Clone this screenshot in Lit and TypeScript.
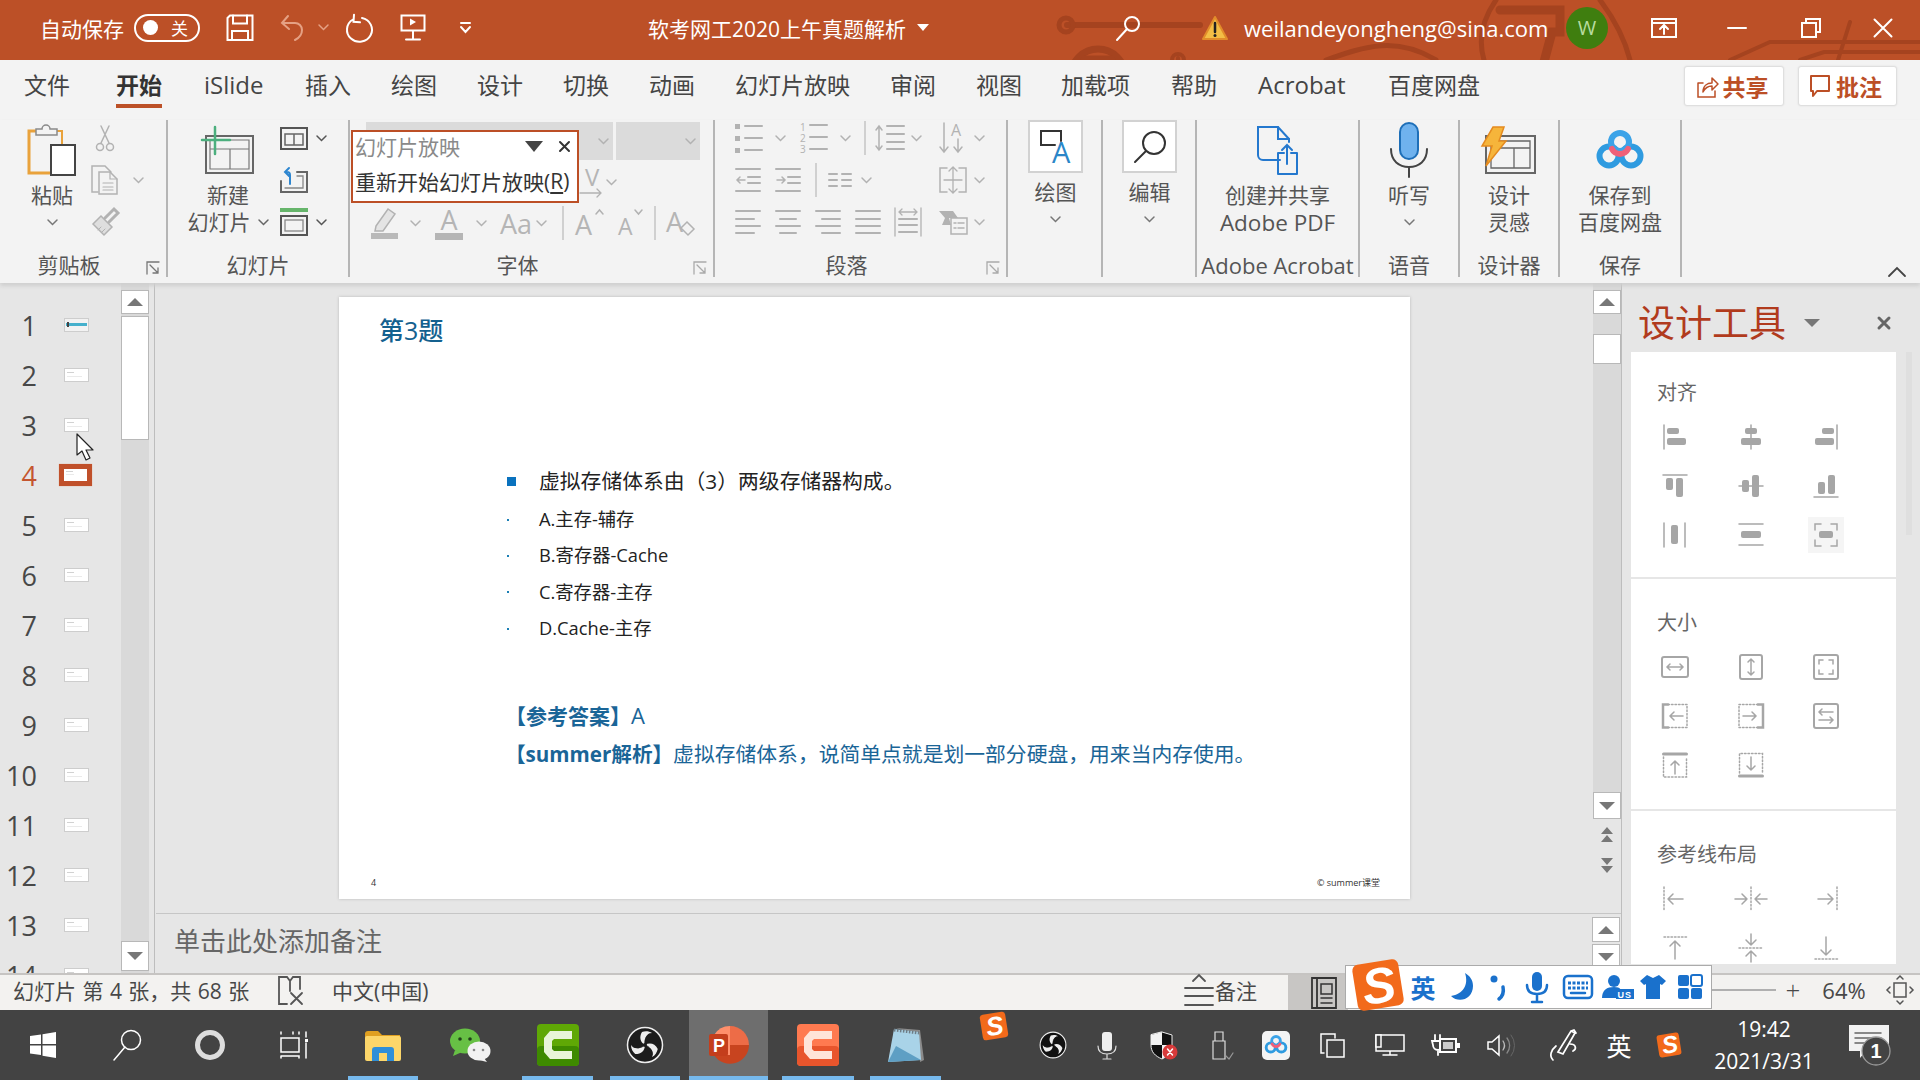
import { LitElement, html, css } from "lit";
import { customElement } from "lit/decorators.js";
import { unsafeHTML } from "lit/directives/unsafe-html.js";

const S = (w: number, h: number, b: string) =>
  `<svg width="${w}" height="${h}" viewBox="0 0 ${w} ${h}" fill="none" stroke-linecap="round">${b}</svg>`;
type It = [number, number, string, string?];
const lay = (o: number, items: It[], cls = "") => {
  let p = o;
  return `<div class="lay ${cls}">` + items.map(([x, w, c, k]) => {
    const m = x - p; p = x + w;
    return `<span class="slot ${k || ""}" style="margin-left:${m}px;width:${w}px">${c}</span>`;
  }).join("") + "</div>";
};
const G = "#B2B2B2";
const chev = (c = "#777") => S(11, 7, `<path d="M1 1l4.500 4.500L10 1" stroke="${c}" stroke-width="1.500"/>`);
const big = (icon: string, lines: string[], cls = "") =>
  `<span class="big ${cls}"><span class="bi">${icon}</span>${lines.map(l => `<span class="bl">${l}</span>`).join("")}</span>`;
const rows = (r: string[], cls = "") => `<div class="rows ${cls}">${r.join("")}</div>`;

/* ---- title bar icons ---- */
const W = `stroke="#fff" stroke-width="2"`;
const tSave = S(28, 27, `<path d="M1.500 4v22h25V1.500H4z" ${W}/><path d="M7 1.500v8h14v-8M6 26v-9h16v9" ${W}/>`);
const tUndo = S(26, 27, `<path d="M9 2L3 9l7 6M3 9h13a7 7 0 0 1 7 7c0 4-3 8-7 10" stroke="#E5A184" stroke-width="2"/>`);
const tRedo = S(30, 28, `<path d="M16 4a12.500 12 0 1 1-9 1.500M8 .8l-.5 7 6.500 .5" ${W}/>`);
const tPres = S(26, 27, `<path d="M1.500 1.500h23v15h-23zM13 17v8M6 25.500h14" ${W}/><path d="M10 4.500l6 3.500-6 3.500z" fill="#fff"/>`);
const tCust = S(11, 12, `<path d="M1 1h9M1 5l4.500 5L10 5" ${W}/>`);
const tSearch = S(26, 26, `<circle cx="17" cy="9" r="7" ${W}/><path d="M12 14L2 25" ${W}/>`);
const tWarn = S(26, 26, `<path d="M13 2L25 24H1z" fill="#F3BE45" stroke="#E28C2A" stroke-width="2" stroke-linejoin="round"/><path d="M13 8v9" stroke="#222" stroke-width="2.500"/><circle cx="13" cy="20.500" r="1.500" fill="#222"/>`);
const tDisp = S(26, 20, `<rect x="1" y="1" width="24" height="18" ${W}/><path d="M1 5h24M13 16V8M9 11l4-4 4 4" ${W}/>`);
const tMin = S(20, 4, `<path d="M1 2h18" ${W}/>`);
const tRest = S(20, 20, `<path d="M5 5V1h14v13h-4" ${W}/><rect x="1" y="5" width="14" height="14" ${W}/>`);
const tClose = S(20, 20, `<path d="M1.500 1.500l17 17M18.500 1.500l-17 17" ${W}/>`);

/* ---- ribbon icons ---- */
const paste = S(50, 52, `<path d="M9 7H2v42h21" stroke="#E9A23B" stroke-width="3"/><path d="M30 7h5v13" stroke="#E9A23B" stroke-width="2"/><path d="M9 11V5h6a4 4 0 0 1 8 0h7v6z" fill="#F3F3F3" stroke="#8A8A8A" stroke-width="1.500"/><rect x="24" y="21" width="24" height="30" fill="#fff" stroke="#444" stroke-width="2"/>`);
const sciss = S(18, 27, `<path d="M5 1l8 17M13 1L5 18" stroke="${G}" stroke-width="1.500"/><circle cx="4" cy="22" r="3.500" stroke="${G}" stroke-width="1.500"/><circle cx="14" cy="22" r="3.500" stroke="${G}" stroke-width="1.500"/>`);
const copy = S(30, 30, `<path d="M7 27H1V1h13l6 6" stroke="${G}" stroke-width="1.500"/><path d="M8 7h11l7 7v15H8z" stroke="${G}" stroke-width="1.500"/><path d="M12 18h10M12 22h10M12 25h10M19 7v7h7" stroke="${G}" stroke-width="1.200"/>`);
const brush = S(28, 30, `<path d="M2 17l11 11 8-8L10 9z" fill="#DEDEDE" stroke="${G}" stroke-width="1.500"/><path d="M14 11l9-9 4 4-9 9" stroke="${G}" stroke-width="3"/><path d="M7 23l3-3M11 25l3-3" stroke="${G}"/>`);
const newSlide = S(54, 48, `<rect x="5" y="10" width="47" height="37" stroke="#666" stroke-width="2"/><path d="M9 14h39v29H9zM9 23h39M29 23v20" stroke="#777" stroke-width="1.200"/><path d="M14 1v27M1 14h28" stroke="#4CAF7E" stroke-width="2.500"/>`);
const sLayout = S(28, 23, `<rect x="1" y="1" width="26" height="21" stroke="#555" stroke-width="2"/><path d="M5 7h18v11H5zM14 7v11" stroke="#666" stroke-width="1.500"/>`);
const sReset = S(28, 26, `<path d="M1 14v11h26V5H17" stroke="#666" stroke-width="2"/><path d="M5 21h18V9h-6" stroke="#888" stroke-width="1.300"/><path d="M10 17V8a3 3 0 0 0-3-3H6M9 1L5 5l4 4" stroke="#2E86D0" stroke-width="2"/>`);
const sSection = S(28, 28, `<rect x="0" y="0" width="28" height="4" fill="#66B56B"/><rect x="1" y="8" width="26" height="19" stroke="#555" stroke-width="2"/><rect x="5" y="12" width="18" height="11" stroke="#888" stroke-width="1.300"/>`);

const l = (x1: number, y: number, x2: number, c = G, sw = 2) => `<path d="M${x1} ${y}H${x2}" stroke="${c}" stroke-width="${sw}"/>`;
const bullets = S(28, 30, `<rect x="0" y="1" width="5" height="5" fill="${G}"/><rect x="0" y="13" width="5" height="5" fill="${G}"/><rect x="0" y="25" width="5" height="5" fill="${G}"/>` + l(10, 3, 27) + l(10, 15, 27) + l(10, 27, 27));
const numbers = S(28, 32, `<text x="0" y="9" class="nt">1</text><text x="0" y="20" class="nt">2</text><text x="0" y="31" class="nt">3</text>` + l(10, 3, 27) + l(10, 15, 27) + l(10, 27, 27));
const lineSp = S(30, 30, `<path d="M4 3v24M1 7l3-4 3 4M1 23l3 4 3-4" stroke="${G}" stroke-width="1.500"/>` + l(12, 3, 29) + l(12, 11, 29) + l(12, 19, 29) + l(12, 26, 29));
const textDir = `<span class="ticon">${S(26, 32, `<text x="11" y="14" class="at">A</text><path d="M4 1v29M0 25l4 5 4-5M18 17v13M14 25l4 5 4-5" stroke="${G}" stroke-width="1.500"/>`)}</span>`;
const outd = S(26, 26, l(1, 2, 25) + l(13, 10, 25) + l(13, 16, 25) + l(1, 24, 25) + `<path d="M10 13H2M5 10l-3 3 3 3" stroke="${G}" stroke-width="1.500"/>`);
const ind = S(26, 26, l(1, 2, 25) + l(13, 10, 25) + l(13, 16, 25) + l(1, 24, 25) + `<path d="M2 13h8M7 10l3 3-3 3" stroke="${G}" stroke-width="1.500"/>`);
const cols = S(24, 16, l(1, 2, 9) + l(1, 8, 9) + l(1, 14, 9) + l(14, 2, 23) + l(14, 8, 23) + l(14, 14, 23));
const alignTxt = S(30, 28, `<path d="M9 2H2v24h7M21 2h7v24h-7" stroke="${G}" stroke-width="1.500"/><path d="M15 1v26M11 5l4-4 4 4M11 23l4 4 4-4M6 14h18" stroke="${G}" stroke-width="1.300"/>`);
const a1 = S(26, 26, l(1, 2, 25) + l(1, 10, 19) + l(1, 17, 25) + l(1, 24, 19));
const a2 = S(26, 26, l(1, 2, 25) + l(5, 10, 21) + l(1, 17, 25) + l(5, 24, 21));
const a3 = S(26, 26, l(1, 2, 25) + l(7, 10, 25) + l(1, 17, 25) + l(7, 24, 25));
const a4 = S(26, 26, l(1, 2, 25) + l(1, 10, 25) + l(1, 17, 25) + l(1, 24, 25));
const a5 = S(28, 30, `<path d="M1 1v28M27 1v28M5 5h18M8 2L5 5l3 3M20 2l3 3-3 3" stroke="${G}" stroke-width="1.300"/>` + l(5, 12, 23) + l(5, 18, 23) + l(5, 25, 23));
const smart = S(30, 26, `<path d="M1 2h14l5 7h-9l2 7H4l3-7z" fill="${G}"/><rect x="13" y="9" width="16" height="16" fill="#F3F3F3" stroke="${G}" stroke-width="1.500"/><path d="M16 14h2M20 14h6M16 19h2M20 19h6" stroke="${G}" stroke-width="1.500"/>`);
const launcher = S(14, 14, `<path d="M13 1H1v12M4 4l8 8M12 7v5H7" stroke="#777" stroke-width="1.300"/>`);
const launcherG = S(14, 14, `<path d="M13 1H1v12M4 4l8 8M12 7v5H7" stroke="#AAA" stroke-width="1.300"/>`);
const hiPen = S(30, 32, `<path d="M6 19L18 2l7 5-12 17H5z" stroke="${G}" stroke-width="1.500" fill="#E4E4E4"/><rect x="1" y="26" width="27" height="6" fill="#B9B9B9"/>`);
const fUp = S(30, 30, `<text x="0" y="27" class="fa">A</text><path d="M21 6l3.500-4L28 6" stroke="${G}" stroke-width="1.500"/>`);
const fDn = S(26, 30, `<text x="0" y="27" class="fb">A</text><path d="M17 2l3.500 4L24 2" stroke="${G}" stroke-width="1.500"/>`);
const fClr = S(30, 30, `<text x="0" y="24" class="fa">A</text><path d="M21 14l7 7-6 6-7-7z" fill="#F3F3F3" stroke="${G}" stroke-width="1.500"/>`);
const fAV = S(24, 32, `<text x="5" y="20" class="fc">V</text><path d="M0 27h21M17 23l4 4-4 4" stroke="${G}" stroke-width="1.300"/>`);
const drawIc = S(34, 36, `<path d="M16 16H2V2h20v10" stroke="#333" stroke-width="2"/><text x="13" y="34" class="blueA">A</text>`);
const editIc = S(34, 34, `<circle cx="21" cy="13" r="11" stroke="#333" stroke-width="2"/><path d="M13 21L2 32" stroke="#333" stroke-width="2"/>`);
const adobe = S(44, 50, `<path d="M24 35H7a5 5 0 0 1-5-5V2h20l11 12v3" stroke="#2478CE" stroke-width="2"/><path d="M22 2v12h11" stroke="#2478CE" stroke-width="2"/><path d="M22 28v21h19V28h-6M28 28h-6" stroke="#2478CE" stroke-width="2" stroke-linejoin="round"/><path d="M31 39V20M26 25l5-5 5 5" stroke="#2478CE" stroke-width="2"/>`);
const mic = S(38, 56, `<rect x="10" y="1" width="18" height="36" rx="9" fill="#6FB2EE" stroke="#1E6FB8" stroke-width="2"/><path d="M1 27c0 12 8 18 18 18s18-6 18-18M19 45v10" stroke="#444" stroke-width="2"/>`);
const idea = S(56, 48, `<rect x="5" y="10" width="49" height="37" stroke="#666" stroke-width="2"/><path d="M10 15h39v27H10zM10 22h39M33 22v20" stroke="#666" stroke-width="1.300"/><path d="M12 1h11l-5 14h7L5 40l6-20H1z" fill="#F6B53B" stroke="#E58B1F" stroke-width="1.500"/>`);
const baiduB = `<circle cx="13" cy="26" r="9.500" stroke="#2F9BE0" stroke-width="6"/><circle cx="35" cy="26" r="9.500" stroke="#2F9BE0" stroke-width="6"/><circle cx="24" cy="12" r="9" stroke="#3BA3E8" stroke-width="6"/><path d="M16 19a9 9 0 0 0 16 0" stroke="#F06078" stroke-width="6"/>`;
const baidu = S(48, 40, baiduB);

/* ---- design panel ---- */
const K = "#A6A6A6";
const ln = (d: string, sw = 1.500, c = K) => `<path d="${d}" stroke="${c}" stroke-width="${sw}"/>`;
const rc = (x: number, y: number, w: number, h: number) => `<rect x="${x}" y="${y}" width="${w}" height="${h}" rx="2" fill="${K}"/>`;
const alg = (b: string) => S(26, 26, b);
const A1 = [
  alg(ln("M2 1v24") + rc(5, 4, 12, 6) + rc(5, 14, 19, 7)),
  alg(ln("M13 1v24") + rc(7, 4, 12, 6) + rc(3, 14, 20, 7)),
  alg(ln("M24 1v24") + rc(9, 4, 12, 6) + rc(2, 14, 19, 7)),
  alg(ln("M1 2h24") + rc(4, 5, 7, 12) + rc(14, 5, 7, 19)),
  alg(ln("M1 13h24") + rc(4, 7, 7, 12) + rc(14, 2, 7, 22)),
  alg(ln("M1 24h24") + rc(5, 9, 7, 12) + rc(15, 2, 7, 19)),
  alg(ln("M2 1v24M23 1v24") + rc(9, 3, 7, 19)),
  alg(ln("M1 2h24M1 23h24") + rc(3, 9, 20, 7)),
  S(26, 26, ln("M8 2H2v6M18 2h6v6M2 18v6h6M24 18v6h-6") + rc(6, 9, 14, 7)),
];
const dot = (d: string) => `<path d="${d}" stroke="${K}" stroke-width="1.500" stroke-dasharray="1.500 2"/>`;
const A2 = [
  S(28, 22, `<rect x="1" y="1" width="26" height="20" rx="2" stroke="${K}" stroke-width="2"/>` + ln("M6 11h16M9 8l-3 3 3 3M19 8l3 3-3 3")),
  S(24, 26, `<rect x="1" y="1" width="22" height="24" rx="2" stroke="${K}" stroke-width="2"/>` + ln("M12 5v16M9 8l3-3 3 3M9 18l3 3 3-3")),
  S(26, 26, `<rect x="1" y="1" width="24" height="24" rx="2" stroke="${K}" stroke-width="2"/>` + ln("M6 10V6h4M20 10V6h-4M6 16v4h4M20 16v4h-4")),
  S(28, 26, ln("M7 1.500H2v23h5", 2.500) + dot("M7 1.500h19v23H7") + ln("M22 13H9M13 9l-4 4 4 4")),
  S(28, 26, ln("M21 1.500h5v23h-5", 2.500) + dot("M21 1.500H2v23h19") + ln("M6 13h13M15 9l4 4-4 4")),
  S(26, 26, `<rect x="1" y="1" width="24" height="24" rx="2" stroke="${K}" stroke-width="2"/>` + ln("M6 9h14M9 6L6 9l3 3M6 17h14M17 14l3 3-3 3")),
  S(26, 26, ln("M1.500 2h23", 3) + dot("M1.500 5v20h23V5") + ln("M13 22V9M9 13l4-4 4 4")),
  S(26, 26, ln("M1.500 24h23", 3) + dot("M1.500 21V1.500h23V21") + ln("M13 5v13M9 14l4 4 4-4")),
];
const A3 = [
  S(26, 26, dot("M2 1v24") + ln("M6 13h15M6 13l5-5M6 13l5 5")),
  S(34, 26, dot("M17 1v24") + ln("M1 13h12M13 13l-5-5M13 13l-5 5M33 13H21M21 13l5-5M21 13l5 5")),
  S(26, 26, dot("M24 1v24") + ln("M5 13h15M20 13l-5-5M20 13l-5 5")),
  S(26, 26, dot("M2 2h23") + ln("M13 6v18M13 6L8 11M13 6l5 5")),
  S(26, 30, dot("M1 15h24") + ln("M13 1v11M13 12L8 7M13 12l5-5M13 29V18M13 18l-5 5M13 18l5 5")),
  S(26, 26, dot("M2 24h23") + ln("M13 2v18M13 20l-5-5M13 20l5-5")),
];

/* ---- taskbar / status ---- */
const W1 = `stroke="#fff" stroke-width="1.500"`;
const win = S(26, 26, `<path d="M0 4l11-1.500V12H0zM12.500 2.200L26 0v12H12.500zM0 13.500h11V23L0 21.500zM12.500 13.500H26V26l-13.500-2.200z" fill="#fff"/>`);
const tbSearch = S(30, 32, `<circle cx="19" cy="11" r="9.500" ${W1}/><path d="M13 18L2 31" ${W1}/>`);
const ring = S(32, 32, `<circle cx="16" cy="16" r="12.500" stroke="#ddd" stroke-width="5"/>`);
const tview = S(30, 28, `<path d="M1 1v2M13 1v2M1 7h18v14H1zM1 25v2M1 25h18v2M19 1v2M26 1v5M26 12v15" ${W1}/><rect x="25" y="8" width="3" height="3" fill="#fff"/>`);
const files = S(38, 31, `<path d="M1 4a3 3 0 0 1 3-3h10l4 4h18v8H1z" fill="#E0A021"/><rect x="1" y="6" width="36" height="25" rx="2" fill="#FCD66A"/><path d="M8 31V20a3 3 0 0 1 3-3h16a3 3 0 0 1 3 3v11h-7v-8h-8v8z" fill="#2F8FD8"/>`);
const wechat = S(42, 34, `<ellipse cx="16" cy="13" rx="15" ry="12.500" fill="#67C045"/><path d="M6 22l-2 6 8-3.500z" fill="#67C045"/><circle cx="11" cy="11" r="1.800" fill="#21411A"/><circle cx="21" cy="11" r="1.800" fill="#21411A"/><ellipse cx="30" cy="23" rx="11.500" ry="9.500" fill="#F2F2F2"/><path d="M35 30l3 4-8-2z" fill="#F2F2F2"/><circle cx="25" cy="22" r="1.300" fill="#888"/><circle cx="34" cy="22" r="1.300" fill="#888"/>`);
const cam = (c: string, d: string, m: string) => S(42, 42, `<rect width="42" height="42" rx="4" fill="${c}"/><rect y="22" width="42" height="20" rx="4" fill="${d}"/><path d="M35 7H13l-6 7v14l6 7h22v-8H17l-2-2V17l2-2h18z" fill="${m}"/>`);
const blade = `<path d="M19 19c-5-3-6-8-3-13 3-1 7-1 10 1-4 0-8 3-7 12z" fill="#EEE"/><path d="M19 19c-1-5 1-9 5-11" stroke="#1C1C1C" stroke-width=".8"/>`;
const obs = (s: number, c = "#1C1C1C") => S(s, s, `<g transform="scale(${s / 38})"><circle cx="19" cy="19" r="17.500" fill="${c}" stroke="#EEE" stroke-width="1.500"/>${[0, 120, 240].map(a => `<g transform="rotate(${a} 19 19)">${blade}</g>`).join("")}<circle cx="19" cy="19" r="2" fill="${c}"/></g>`);
const ppt = S(40, 38, `<path d="M21 0a19 19 0 0 1 19 19H21z" fill="#ED6C47"/><path d="M40 19a19 19 0 0 1-35 10h16V19z" fill="#C8441F"/><path d="M21 0A19 19 0 0 0 5 9v20h16z" fill="#FF8F6B"/><rect x="0" y="8" width="19" height="22" rx="2" fill="#C43E1C"/><text x="4" y="25.500" class="pp">P</text>`);
const notep = S(38, 36, `<path d="M9 1l24 2 4 30-4 2L31 8z" fill="#8B8B8B"/><path d="M7 2l25 3 2 28L1 35z" fill="#A9D3E8"/><path d="M1 35l8-16 25 14z" fill="#5E9FC4"/><path d="M7 3l25 3" stroke="#6E7C85" stroke-width="3" stroke-dasharray="1.500 1.500" stroke-linecap="butt"/>`);
const sgLogo = (s: number, fs: number, x: number, y: number) => S(s, s, `<g transform="rotate(-9 ${s / 2} ${s / 2})"><rect x="${s * .1}" y="${s * .1}" width="${s * .8}" height="${s * .8}" rx="${s * .1}" fill="#F26A1B"/><text x="${x}" y="${y}" class="sg" font-size="${fs}">S</text></g>`);
const trayMic = S(20, 29, `<rect x="5" y="1" width="10" height="19" rx="3" fill="#EEE"/><path d="M1 15c0 6 3 8 9 8s9-2 9-8M10 23v4M6 28h8" stroke="#DDD" stroke-width="1.200"/>`);
const shield = S(28, 29, `<path d="M12 1l10 3v10c0 7-4 11-10 14C5 25 1 21 1 14V4z" fill="#111" stroke="#eee"/><path d="M12 1v13H1V4zM12 14h10c0 7-4 11-10 14z" fill="#F2F2F2"/><circle cx="20" cy="21" r="7.500" fill="#D83B3B"/><path d="M17.500 18l5 6M22.500 18l-5 6" stroke="#fff" stroke-width="1.500"/>`);
const usb = S(22, 29, `<path d="M3 1h8v9H3zM1 10h12v18H1z" stroke="#ddd" stroke-width="1.200"/><path d="M14 25l3 3 4-6" stroke="#999" stroke-width="1.200"/>`);
const baiduT = S(28, 29, `<rect width="28" height="29" rx="5" fill="#F4F4F4"/><g transform="translate(2.500 4) scale(.48)">${baiduB}</g>`);
const trayCopy = S(26, 25, `<path d="M4 20H1V1h14v4" ${W1}/><rect x="7" y="7" width="17" height="17" ${W1}/>`);
const trayPc = S(30, 22, `<path d="M1 1h28v16H1zM15 17v4M8 21h14" ${W1}/><rect x="1" y="1" width="5" height="12" fill="#434343" ${W1}/>`);
const trayBat = S(30, 22, `<path d="M5 1v6M10 1v6M2 7h11v4a5 5 0 0 1-10 0zM8 16v5" stroke="#fff" stroke-width="1.800"/><rect x="10" y="5" width="16" height="13" fill="#434343" stroke="#fff" stroke-width="2"/><rect x="13" y="8" width="10" height="7" fill="#ccc"/><rect x="27" y="9" width="3" height="5" fill="#fff"/>`);
const trayVol = S(27, 23, `<path d="M1 8h4l7-6v19l-7-6H1z" ${W1}/><path d="M16 7a8 8 0 0 1 0 9" stroke="#bbb" stroke-width="1.300"/><path d="M20 4a12 12 0 0 1 0 15" stroke="#888" stroke-width="1.300"/><path d="M24 1a17 17 0 0 1 0 21" stroke="#666"/>`);
const trayPen = S(32, 32, `<path d="M10 23L23 2l4 2-12 21zM23 2l3-1 2 3" stroke="#fff" stroke-width="1.700"/><path d="M8 17c-5 4-7 10-3 14M22 15c6 0 7 5 3 7" stroke="#fff" stroke-width="1.700"/>`);
const bell = S(42, 40, `<path d="M1 0h40v26H18l-6 7v-7H1z" fill="#F2F2F2"/><path d="M7 8h26M7 13h26M7 18h18" stroke="#666" stroke-width="1.500"/><circle cx="28" cy="26" r="14" fill="#444" stroke="#999" stroke-width="1.300"/><text x="28" y="33" class="bn">1</text>`);
const IB = "#1A71CC";
const moon = S(24, 30, `<path d="M15 1c4 12-2 21-14 23 8 8 22 3 22-10 0-6-3-10-8-13z" fill="${IB}"/>`);
const comma = S(18, 26, `<circle cx="4" cy="5" r="3.500" fill="${IB}"/><path d="M13 13c1 5 0 9-4 12" stroke="${IB}" stroke-width="3.500"/>`);
const imic = S(24, 32, `<rect x="7" y="1" width="10" height="19" rx="5" fill="${IB}"/><path d="M2 14c0 6 4 9 10 9s10-3 10-9M12 23v7M7 31h10" stroke="${IB}" stroke-width="2.500"/>`);
const kbd = S(30, 24, `<rect x="1" y="1" width="28" height="22" rx="4" stroke="${IB}" stroke-width="2.500"/><path d="M5 8h20M5 13h20" stroke="${IB}" stroke-width="3" stroke-dasharray="3 1.500" stroke-linecap="butt"/><path d="M8 18h14" stroke="${IB}" stroke-width="2.500"/>`);
const iuser = S(32, 26, `<circle cx="12" cy="7" r="6" fill="${IB}"/><path d="M0 24c0-8 5-11 12-11s8 3 8 11z" fill="${IB}"/><rect x="14" y="15" width="18" height="10" fill="${IB}"/><text x="15.500" y="23.500" class="us">US</text>`);
const ishirt = S(26, 26, `<path d="M7 1l6 3 6-3 7 6-4 4-2-1v15H6V10l-2 1-4-4z" fill="${IB}"/>`);
const igrid = S(24, 24, `<rect width="11" height="11" rx="2" fill="${IB}"/><rect x="13" width="11" height="11" rx="2" stroke="${IB}" stroke-width="2"/><rect y="13" width="11" height="11" rx="2" fill="${IB}"/><rect x="13" y="13" width="11" height="11" rx="2" fill="${IB}"/>`);
const fit = S(28, 30, `<rect x="8" y="8" width="12" height="14" stroke="#555" stroke-width="1.500"/><path d="M11 4l3-3 3 3M11 26l3 3 3-3M4 12l-3 3 3 3M24 12l3 3-3 3" stroke="#555" stroke-width="1.500"/>`);
const spell = S(26, 30, `<path d="M9 29H1V2h8l3 4 3-4h7v12M12 6v10" stroke="#555" stroke-width="1.800"/><path d="M13 18l11 11M24 18L13 29" stroke="#555" stroke-width="1.800"/>`);
const notesIc = S(30, 34, `<path d="M9 8l6-6 6 6" stroke="#555" stroke-width="1.800"/><path d="M1 15h28M1 23h28M1 32h28" stroke="#555" stroke-width="1.800"/>`);
const viewIc = S(26, 32, `<path d="M1 1h24v30H1zM6 1v30" stroke="#333" stroke-width="1.800"/><path d="M10 7h11v10H10zM10 21h11M10 26h11" stroke="#333" stroke-width="1.500"/>`);
const tri = (up: boolean, c = "#777") => S(16, 8, up ? `<path d="M8 0l8 8H0z" fill="${c}"/>` : `<path d="M8 8L0 0h16z" fill="${c}"/>`);
const dbl = (up: boolean) => S(14, 16, up ? `<path d="M7 0l6 7H1zM7 8l6 7H1z" fill="#777"/>` : `<path d="M7 7L1 0h12zM7 15L1 8h12z" fill="#777"/>`);

const circuit = S(1920, 60, `<g stroke="#A5431F" fill="none"><path d="M1067 25H1200" stroke-width="6"/><circle cx="1066" cy="25" r="7" stroke-width="5"/><circle cx="1098" cy="76" r="27" stroke-width="7"/><path d="M1085 60h26" stroke-width="9"/><circle cx="1178" cy="60" r="6" stroke-width="4"/><path d="M1178 58v4" stroke-width="4"/><path d="M1500 10h60v22h-8l-8 30" stroke-width="9"/><path d="M1496 0c-14 20-18 40-12 60M1600 0c12 16 24 36 30 60M1326 60c40-14 70-24 110 0" stroke-width="5"/><path d="M1730 60l40-18h150M1800 60l24-8h96M1850 22l-12 38" stroke-width="4"/></g>`);

@customElement("app-root")
export class AppRoot extends LitElement {
  static styles = css`
    :host { display:block; width:1920px; height:1080px; overflow:hidden; position:relative;
      font-family:"Open Sans","Noto Sans CJK SC",sans-serif; color:#444; background:#E6E6E6; }
    svg { display:block; overflow:visible; }
    .lay { display:flex; align-items:center; white-space:nowrap; }
    .slot { display:flex; justify-content:center; align-items:center; flex:none; }
    .slot.t { justify-content:flex-start; }

    .title { height:60px; background:#BC5027; color:#fff; position:relative; overflow:hidden; }
    .decor { position:absolute; left:0; top:0; }
    .title .lay { position:relative; height:55px; font-size:21px; }
    .toggle { width:62px; height:24px; border:2px solid #fff; border-radius:14px; display:flex; align-items:center; justify-content:space-between; padding:0 10px 0 7px; font-size:17px; }
    .toggle i { width:15px; height:15px; background:#fff; border-radius:50%; display:block; }
    .email { font-size:22px; }
    .caret { width:0; height:0; border:6px solid transparent; border-top:7px solid #fff; border-bottom:0; display:block; }
    .avatar { width:42px; height:42px; border-radius:50%; background:#3F7E0F; color:#B8DCA0; display:flex; align-items:center; justify-content:center; font-size:20px; }

    .tabs { height:60px; background:#F3F3F3; font-size:23px; color:#444; }
    .tabs .lay { height:50px; }
    .tabs .tb { display:block; line-height:30px; position:relative; }
    .tabs .lat { font-size:24px; }
    .tabs .on { font-weight:700; color:#333; }
    .tabs .on::after { content:""; position:absolute; left:0; right:0; top:34px; height:4px; background:#BC5027; }
    .tabbtn { width:100%; height:40px; background:#fff; border:1px solid #DFDFDF; border-radius:3px; box-shadow:0 0 2px #ddd; display:flex; align-items:center; justify-content:center; gap:5px; color:#BC4F26; font-weight:700; font-size:23px; margin-top:2px; box-sizing:border-box; padding-right:4px; }

    .ribbon { height:163px; background:#F3F3F3; display:flex; font-size:21px; box-shadow:0 3px 4px #CFCFCF; position:relative; z-index:2; flex:none; }
    .g { height:157px; border-right:2px solid #B5B5B5; display:flex; flex-direction:column; position:relative; flex:none; }
    .g1 { width:166px; } .g2 { width:180px; } .g3 { width:363px; } .g4 { width:291px; } .g5 { width:93px; } .g6 { width:92px; } .g7 { width:161px; } .g8 { width:98px; } .g9 { width:98px; } .g10 { width:120px; }
    .gbody { height:134px; }
    .gbody > .lay { align-items:flex-start; }
    .glabel { height:24px; line-height:24px; text-align:center; color:#555; position:relative; white-space:nowrap; font-size:21px; }
    .glabel .shift { margin-right:28px; }
    .glabel.lat { font-size:22px; }
    .launch { position:absolute; right:6px; top:8px; display:block; }
    .big { display:flex; flex-direction:column; align-items:center; white-space:nowrap; width:100%; }
    .bi { height:60px; margin-bottom:2px; display:flex; align-items:center; justify-content:center; }
    .bl { height:27px; line-height:27px; display:flex; align-items:center; gap:7px; color:#555; }
    .bl .lat { font-size:22.500px; }
    .big.box .bi { height:59px; margin-bottom:0; align-items:flex-start; }
    .rows { width:100%; margin-top:-3px; }
    .rows > .lay { height:42px; }
    .rows.f { margin-top:0; }
    .rows.f > .lay:nth-child(2) { height:40px; }
    .ib { width:55px; height:53px; background:#fff; border:2px solid #D2D2D2; box-sizing:border-box; display:flex; align-items:center; justify-content:center; }
    .sel { width:100%; height:38px; background:#DBDBDB; display:flex; align-items:center; justify-content:flex-end; padding-right:4px; box-sizing:border-box; }
    .gt { color:#B5B5B5; font-size:27px; line-height:1; }
    .ua { display:flex; flex-direction:column; align-items:center; color:#B5B5B5; font-size:27px; line-height:26px; }
    .ua i { display:block; width:28px; height:7px; background:#B5B5B5; }
    .sep { width:2px; height:34px; background:#D0D0D0; display:block; }
    .ticon { display:block; }
    text.nt { font:10px "Open Sans"; fill:#B2B2B2; }
    text.at { font:16px "Open Sans"; fill:#B2B2B2; }
    text.fa { font:27px "Open Sans"; fill:#B5B5B5; }
    text.fb { font:23px "Open Sans"; fill:#B5B5B5; }
    text.fc { font:24px "Open Sans"; fill:#B5B5B5; }
    text.blueA { font:29px "Open Sans"; fill:#2B86C8; }
    .pop { position:absolute; left:1px; top:10px; width:228px; height:73px; box-sizing:border-box; background:#fff; border:2px solid #BC4F26; z-index:3; color:#333; font-size:21px; }
    .pop .lay { height:28px; }
    .pop .lay + .lay { height:41px; }
    .pop .h { color:#8A8A8A; }
    .pop u { text-underline-offset:3px; }
    .poptri { width:0; height:0; border:9px solid transparent; border-top:11px solid #444; border-bottom:0; display:block; }
    .collapse { position:absolute; left:1888px; top:147px; z-index:3; }

    .main { display:flex; height:690px; background:#E6E6E6; }
    .left { width:155px; flex:none; display:flex; border-right:1px solid #BDBDBD; box-sizing:border-box; overflow:hidden; position:relative; }
    .list { width:121px; padding-top:17px; }
    .li { height:50px; display:flex; align-items:center; font-size:27px; color:#484848; }
    .li b { font-weight:400; width:37px; text-align:right; line-height:1; }
    .li.cur b { color:#C4552F; }
    .th { display:block; margin-left:27px; width:23px; height:12px; background:#fff; border:1px solid #CDCDCD; position:relative; flex:none; }
    .th i { position:absolute; left:2px; top:3px; width:7px; height:1px; background:#D2D2D2; display:block; }
    .th s { position:absolute; left:2px; top:7px; width:15px; height:1px; background:#EAEAEA; display:block; }
    .th.t1 { background:#F2F2F2; }
    .th.t1 i { left:1px; top:4px; width:21px; height:3px; background:#45B0CC; }
    .th.t1 s { left:2px; top:3px; width:2px; height:5px; background:#444; }
    .th.cur { margin-left:22px; width:23px; height:12px; border:5px solid #C0502A; box-shadow:0 0 1px #E0A080; }
    .th.cur i { top:2px; } .th.cur s { top:5px; width:8px; }
    .vsb { width:28px; flex:none; background:#D9D9D9; display:flex; flex-direction:column; }
    .btn { height:24px; background:#fff; border:1px solid #B8B8B8; box-sizing:border-box; display:flex; align-items:center; justify-content:center; flex:none; }
    .bthumb { background:#fff; border:1px solid #B8B8B8; box-sizing:border-box; flex:none; }
    .vup { margin-top:7px; }
    .vthumb { height:124px; margin-top:2px; margin-bottom:auto; }
    .vdn { height:30px; margin-bottom:2px; }
    .cursor { position:absolute; left:76px; top:150px; }
    .center { width:1467px; flex:none; display:flex; flex-direction:column; border-right:1px solid #BDBDBD; box-sizing:border-box; }
    .stage { height:630px; display:flex; flex:none; }
    .canvas { flex:1; padding:14px 0 0 184px; }
    .slide { width:1071px; height:602px; background:#fff; box-shadow:0 0 3px #BBB; display:flex; flex-direction:column; box-sizing:border-box; padding:18px 30px 10px 0; color:#222; }
    .st { margin-left:40px; height:30px; line-height:30px; font-size:25px; font-weight:500; color:#14618F; }
    .sl { margin:120px 0 0 168px; }
    .sl div { display:flex; align-items:center; height:36.300px; font-size:18.300px; color:#222; }
    .sl div i { display:block; width:2px; height:2px; background:#1A7FB5; margin-right:30px; flex:none; margin-top:3px; }
    .sl .q { height:30px; font-size:20.800px; margin-bottom:5px; }
    .sl .q i { width:9px; height:9px; background:#0A72BE; margin-right:23px; margin-top:2px; }
    .ans { margin:52px 0 0 166px; color:#1A6597; font-size:21px; height:36px; line-height:36px; white-space:nowrap; }
    .ans b { font-weight:700; }
    .ans.a2 { margin-top:3px; }
    .ans.a2 b { font-size:20.600px; }
    .ans span { font-size:20.800px; }
    .ans .A { font-size:22px; }
    .foot { margin-top:auto; display:flex; justify-content:space-between; align-items:center; padding-left:32px; font-size:9px; height:14px; color:#333; }
    .rsb { width:28px; flex:none; display:flex; flex-direction:column; align-items:stretch; }
    .rtrack { height:536px; background:#D9D9D9; display:flex; flex-direction:column; flex:none; padding-top:7px; box-sizing:border-box; }
    .rtrack .bthumb { height:30px; margin-top:20px; margin-bottom:auto; }
    .rsb .btn.d { height:27px; }
    .dbl { display:flex; flex-direction:column; gap:15px; align-items:center; margin-top:8px; }
    .notes { height:60px; flex:none; display:flex; border-top:1px solid #C6C6C6; box-sizing:border-box; margin-left:1px; }
    .ntext { flex:1; font-size:26px; color:#666; padding:10px 0 0 18px; line-height:34px; }
    .nsb { width:28px; flex:none; display:flex; flex-direction:column; gap:2px; padding-top:3px; margin-right:1px; }
    .nsb .btn { height:25px; }

    .design { flex:1; display:flex; flex-direction:column; min-width:0; }
    .dh { height:69px; flex:none; position:relative; font-size:37px; color:#B13B1D; line-height:1; }
    .dh .lay { height:79px; }
    .dbody { display:flex; align-items:flex-start; }
    .dp { width:265px; height:612px; margin-left:9px; background:#fff; overflow:hidden; flex:none; color:#666; position:relative; }
    .dscroll { width:6px; height:183px; margin-left:10px; background:#DFDFDF; flex:none; }
    .dsec { border-bottom:2px solid #E6E6E6; }
    .dsec .lay { height:49px; }
    .dt { font-size:20px; padding:1px 0 0 26px; height:39px; line-height:40px; color:#666; }
    .sec1 { padding:20px 0 18px; } .sec2 { padding:23px 0 20px; } .sec3 { padding-top:23px; border:none; }
    .hl { width:36px; height:36px; background:#F5F5F5; display:flex; align-items:center; justify-content:center; }

    .status { height:35px; background:#F3F2F0; border-top:2px solid #C6C4C2; font-size:21px; color:#484848; position:relative; flex:none; }
    .status > .lay { height:29px; }
    .wide { word-spacing:1px; }
    .vw { height:35px; align-self:flex-start; }
    .gblk { width:100%; height:35px; background:#C8C6C4; display:flex; align-items:center; padding-left:23px; box-sizing:border-box; }
    .sld { width:100%; height:2px; background:#B0B0B0; display:block; }
    .plus { font-size:26px; font-weight:300; line-height:1; }
    .pct { font-size:22px; }
    .ime { position:absolute; left:1345px; top:-10px; width:367px; height:44px; background:#fff; border:1px solid #ABABAB; box-sizing:border-box; z-index:5; }
    .ime .lay { height:42px; }
    .ime .y { color:#1A71CC; font-size:25px; font-weight:700; }
    .sgbig { position:absolute; left:1349px; top:-19px; z-index:6; }
    text.sg { font-family:"Liberation Sans"; font-weight:700; font-style:italic; fill:#fff; }
    text.us { font:bold 9px "Liberation Sans"; fill:#fff; letter-spacing:1px; }

    .taskbar { height:70px; background:#434343; color:#fff; flex:none; }
    .taskbar .lay { height:70px; }
    .taskbar .slot { height:70px; }
    .taskbar .run { box-shadow:inset 0 -4px 0 #76B9ED; }
    .taskbar .act { background:#6E6E6E; box-shadow:inset 0 -4px 0 #76B9ED; }
    .clock { display:flex; flex-direction:column; align-items:center; line-height:32px; font-size:21px; }
    .en { font-size:25px; }
    .raise { margin-top:-39px; display:block; }
    text.pp { font:bold 18px "Liberation Sans"; fill:#fff; }
    text.bn { font:bold 20px "Liberation Sans"; fill:#fff; text-anchor:middle; }
  `;

  render() {
    const titleBar = lay(0, [
      [40, 84, "自动保存", "t"], [134, 66, `<span class="toggle"><i></i>关</span>`],
      [226, 28, tSave], [279, 26, tUndo], [318, 11, chev("#E5A184")], [346, 30, tRedo], [400, 26, tPres], [460, 11, tCust],
      [648, 258, "软考网工2020上午真题解析", "t"], [917, 12, `<span class="caret"></span>`],
      [1115, 26, tSearch], [1202, 26, tWarn], [1244, 304, `<span class="email">weilandeyongheng@sina.com</span>`, "t"],
      [1566, 42, `<span class="avatar">W</span>`], [1651, 26, tDisp], [1727, 20, tMin], [1801, 20, tRest], [1873, 20, tClose],
    ]);
    const tabs: [number, string, string?][] = [[24, "文件"], [116, "开始", "on"], [204, "iSlide", "lat"], [305, "插入"], [391, "绘图"], [477, "设计"], [563, "切换"], [649, "动画"], [735, "幻灯片放映"], [890, "审阅"], [976, "视图"], [1061, "加载项"], [1171, "帮助"], [1258, "Acrobat", "lat"], [1388, "百度网盘"]];
    const tabW: Record<string, number> = { "幻灯片放映": 115, "iSlide": 60, "加载项": 69, "Acrobat": 90, "百度网盘": 92 };
    const tabRow = lay(0, [
      ...tabs.map(([x, t, k]) => [x, tabW[t] || 46, `<span class="tb ${k || ""}">${t}</span>`, "t"] as It),
      [1684, 100, `<span class="tabbtn">${S(22, 24, `<path d="M2 9v14h17v-6M2 9h5" stroke="#BC4F26" stroke-width="1.500"/><path d="M7 18c0-6 4-9 9-9V4l6 6-6 6v-4c-4 0-7 2-9 6z" stroke="#BC4F26" stroke-width="1.500" stroke-linejoin="round"/>`)}共享</span>`],
      [1798, 99, `<span class="tabbtn">${S(22, 24, `<path d="M2 2h18v15H8l-4 5v-5H2z" stroke="#BC4F26" stroke-width="2" stroke-linejoin="round"/>`)}批注</span>`],
    ]);

    const g1 = lay(0, [
      [12, 80, big(paste, ["粘贴", chev()])],
      [86, 62, rows([
        lay(86, [[96, 18, sciss]]),
        lay(86, [[91, 30, copy], [133, 11, chev(G)]]),
        lay(86, [[91, 28, brush]]),
      ])],
    ]);
    const g2 = lay(168, [
      [185, 86, big(newSlide, ["新建", `幻灯片${chev("#666")}`])],
      [280, 50, rows([
        lay(280, [[280, 28, sLayout], [316, 11, chev("#555")]]),
        lay(280, [[280, 28, sReset]]),
        lay(280, [[280, 28, sSection], [316, 11, chev("#555")]]),
      ])],
    ]);
    const sep = `<span class="sep"></span>`;
    const g3 = rows([
      lay(350, [[366, 247, `<span class="sel">${chev(G)}</span>`], [616, 84, `<span class="sel">${chev(G)}</span>`]]),
      lay(350, [[580, 24, fAV], [606, 11, chev(G)]]),
      lay(350, [[370, 30, hiPen], [410, 11, chev(G)], [434, 30, `<span class="ua">A<i></i></span>`], [476, 11, chev(G)],
        [499, 34, `<span class="gt">Aa</span>`], [536, 11, chev(G)], [562, 2, sep],
        [575, 30, fUp], [618, 26, fDn], [654, 2, sep], [666, 30, fClr]]),
    ], "f");
    const g4 = rows([
      lay(715, [[735, 28, bullets], [775, 11, chev(G)], [800, 28, numbers], [840, 11, chev(G)], [864, 2, sep], [875, 30, lineSp], [911, 11, chev(G)], [940, 26, textDir], [974, 11, chev(G)]]),
      lay(715, [[735, 26, outd], [775, 26, ind], [815, 2, sep], [828, 24, cols], [861, 11, chev(G)], [938, 30, alignTxt], [974, 11, chev(G)]]),
      lay(715, [[735, 26, a1], [775, 26, a2], [815, 26, a3], [855, 26, a4], [894, 28, a5], [938, 30, smart], [974, 11, chev(G)]]),
    ]);
    const g5 = big(`<span class="ib">${drawIc}</span>`, ["绘图", chev()], "box");
    const g6 = big(`<span class="ib">${editIc}</span>`, ["编辑", chev()], "box");

    const thumbs = Array.from({ length: 14 }, (_, i) => i + 1);
    const pop = lay(0, [[2, 110, "幻灯片放映", "t h"], [172, 18, `<span class="poptri"></span>`], [205, 13, S(13, 13, `<path d="M2 2l9 9M11 2l-9 9" stroke="#333" stroke-width="2"/>`)]]);
    const pop2 = lay(0, [[2, 218, "重新开始幻灯片放映(<u>R</u>)", "t"]]);

    const al = (o: number, xs: number[], icons: string[], hiIdx = -1) =>
      lay(o, icons.map((ic, i) => {
        const c = xs[i], w = 40;
        return [c - w / 2, w, i === hiIdx ? `<span class="hl">${ic}</span>` : ic] as It;
      }));
    const X = [1675, 1751, 1826];

    return html`
      <div class="title"><div class="decor">${unsafeHTML(circuit)}</div>${unsafeHTML(titleBar)}</div>
      <div class="tabs">${unsafeHTML(tabRow)}</div>
      <div class="ribbon">
        <section class="g g1"><div class="gbody">${unsafeHTML(g1)}</div><div class="glabel"><span class="shift">剪贴板</span><span class="launch">${unsafeHTML(launcher)}</span></div></section>
        <section class="g g2"><div class="gbody">${unsafeHTML(g2)}</div><div class="glabel">幻灯片</div></section>
        <section class="g g3">
          <div class="gbody">${unsafeHTML(g3)}</div><div class="glabel"><span class="shift">字体</span><span class="launch">${unsafeHTML(launcherG)}</span></div>
          <div class="pop">${unsafeHTML(pop)}${unsafeHTML(pop2)}</div>
        </section>
        <section class="g g4"><div class="gbody">${unsafeHTML(g4)}</div><div class="glabel"><span class="shift">段落</span><span class="launch">${unsafeHTML(launcherG)}</span></div></section>
        <section class="g g5"><div class="gbody">${unsafeHTML(lay(0, [[20, 55, g5]]))}</div></section>
        <section class="g g6"><div class="gbody">${unsafeHTML(lay(0, [[19, 55, g6]]))}</div></section>
        <section class="g g7"><div class="gbody">${unsafeHTML(big(adobe, ["创建并共享", `<span class="lat">Adobe PDF</span>`]))}</div><div class="glabel lat">Adobe Acrobat</div></section>
        <section class="g g8"><div class="gbody">${unsafeHTML(big(mic, ["听写", chev()]))}</div><div class="glabel">语音</div></section>
        <section class="g g9"><div class="gbody">${unsafeHTML(big(idea, ["设计", "灵感"]))}</div><div class="glabel">设计器</div></section>
        <section class="g g10"><div class="gbody">${unsafeHTML(big(baidu, ["保存到", "百度网盘"]))}</div><div class="glabel">保存</div></section>
        <span class="collapse">${unsafeHTML(S(18, 10, `<path d="M1 9l8-8 8 8" stroke="#444" stroke-width="1.800"/>`))}</span>
      </div>
      <div class="main">
        <div class="left">
          <div class="list">
            ${thumbs.map(n => html`<div class="li ${n === 4 ? "cur" : ""}"><b>${n}</b><span class="th ${n === 1 ? "t1" : ""} ${n === 4 ? "cur" : ""}"><i></i><s></s></span></div>`)}
          </div>
          <div class="vsb">
            <span class="btn vup">${unsafeHTML(tri(true))}</span>
            <span class="bthumb vthumb"></span>
            <span class="btn vdn">${unsafeHTML(tri(false))}</span>
          </div>
          <span class="cursor">${unsafeHTML(S(19, 28, `<path d="M1 1v21l5-4 4 9 4-2-4-8h7z" fill="#fff" stroke="#222" stroke-width="1.200" stroke-linejoin="round"/>`))}</span>
        </div>
        <div class="center">
          <div class="stage">
            <div class="canvas">
              <div class="slide">
                <div class="st">第3题</div>
                <div class="sl">
                  <div class="q"><i></i>虚拟存储体系由（3）两级存储器构成。</div>
                  <div><i></i>A.主存-辅存</div>
                  <div><i></i>B.寄存器-Cache</div>
                  <div><i></i>C.寄存器-主存</div>
                  <div><i></i>D.Cache-主存</div>
                </div>
                <div class="ans"><b>【参考答案】</b><span class="A">A</span></div>
                <div class="ans a2"><b>【summer解析】</b><span>虚拟存储体系，说简单点就是划一部分硬盘，用来当内存使用。</span></div>
                <div class="foot"><span>4</span><span>© summer课堂</span></div>
              </div>
            </div>
            <div class="rsb">
              <div class="rtrack">
                <span class="btn">${unsafeHTML(tri(true))}</span>
                <span class="bthumb"></span>
                <span class="btn d">${unsafeHTML(tri(false))}</span>
              </div>
              <div class="dbl">${unsafeHTML(dbl(true))}${unsafeHTML(dbl(false))}</div>
            </div>
          </div>
          <div class="notes">
            <div class="ntext">单击此处添加备注</div>
            <div class="nsb"><span class="btn">${unsafeHTML(tri(true))}</span><span class="btn">${unsafeHTML(tri(false))}</span></div>
          </div>
        </div>
        <div class="design">
          <div class="dh">${unsafeHTML(lay(1622, [[1638, 150, "设计工具", "t"], [1804, 16, tri(false, "#777")], [1877, 14, S(14, 14, `<path d="M2 2l10 10M12 2L2 12" stroke="#666" stroke-width="3"/>`)]]))}</div>
          <div class="dbody">
            <div class="dp">
              <div class="dsec sec1"><div class="dt">对齐</div>${unsafeHTML(al(1631, X, A1.slice(0, 3)))}${unsafeHTML(al(1631, X, A1.slice(3, 6)))}${unsafeHTML(al(1631, X, A1.slice(6, 9), 2))}</div>
              <div class="dsec sec2"><div class="dt">大小</div>${unsafeHTML(al(1631, X, A2.slice(0, 3)))}${unsafeHTML(al(1631, X, A2.slice(3, 6)))}${unsafeHTML(al(1631, X, A2.slice(6, 8)))}</div>
              <div class="dsec sec3"><div class="dt">参考线布局</div>${unsafeHTML(al(1631, X, A3.slice(0, 3)))}${unsafeHTML(al(1631, X, A3.slice(3, 6)))}</div>
            </div>
            <div class="dscroll"></div>
          </div>
        </div>
      </div>
      <div class="status">
        ${unsafeHTML(lay(0, [[13, 240, `<span class="wide">幻灯片 第 4 张，共 68 张</span>`, "t"], [278, 26, spell], [332, 110, "中文(中国)", "t"],
          [1184, 30, notesIc], [1215, 44, "备注", "t"], [1288, 60, `<span class="gblk">${viewIc}</span>`, "vw"],
          [1712, 64, `<span class="sld"></span>`], [1783, 20, `<span class="plus">+</span>`], [1822, 44, `<span class="pct">64%</span>`], [1886, 28, fit]]))}
        <div class="ime">${unsafeHTML(lay(1346, [[1410, 26, `<span class="y">英</span>`], [1450, 24, moon], [1490, 18, comma], [1525, 24, imic], [1563, 30, kbd], [1602, 32, iuser], [1640, 26, ishirt], [1678, 24, igrid]]))}</div>
        <span class="sgbig">${unsafeHTML(sgLogo(58, 50, 13, 47))}</span>
      </div>
      <div class="taskbar">
        ${unsafeHTML(lay(0, [
          [30, 26, win], [112, 30, tbSearch], [194, 32, ring], [280, 30, tview],
          [348, 70, files, "run"], [435, 70, wechat], [522, 71, cam("#5FA805", "#3E8A00", "#E8F5D8"), "run"], [610, 70, obs(38), "run"],
          [689, 79, ppt, "act"], [782, 72, cam("#FF7A50", "#E8552C", "#FFE4D8"), "run"], [870, 71, notep, "run"],
          [978, 32, `<span class="raise">${sgLogo(32, 26, 8, 25)}</span>`],
          [1039, 28, obs(28, "#111")], [1097, 20, trayMic], [1150, 28, shield], [1212, 22, usb], [1262, 28, baiduT], [1320, 26, trayCopy], [1375, 30, trayPc], [1430, 30, trayBat], [1487, 27, trayVol], [1548, 32, trayPen],
          [1606, 26, `<span class="en">英</span>`], [1655, 28, sgLogo(28, 24, 7, 22)],
          [1704, 120, `<span class="clock"><span>19:42</span><span>2021/3/31</span></span>`], [1848, 42, bell],
        ]))}
      </div>
    `;
  }
}
